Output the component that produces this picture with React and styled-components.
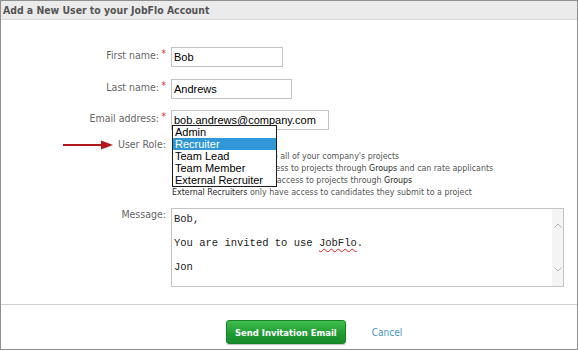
import React from "react";
import styled, { createGlobalStyle } from "styled-components";

const GlobalStyle = createGlobalStyle`
  html, body {
    margin: 0;
    padding: 0;
    background: #ffffff;
  }
  body {
    font-family: "DejaVu Sans Condensed", "DejaVu Sans", sans-serif;
  }
`;

const roles = ["Admin", "Recruiter", "Team Lead", "Team Member", "External Recruiter"];

const Panel = styled.div`
  width: 578px;
  height: 350px;
  box-sizing: border-box;
  border: 1px solid #8f8f8f;
  display: flex;
  flex-direction: column;
  background: #fff;
  overflow: hidden;
`;

const Header = styled.div`
  height: 18px;
  background: #ebebeb;
  border-bottom: 1px solid #dadada;
  padding-left: 2px;
  display: flex;
  align-items: center;
  font-weight: bold;
  font-size: 10.4px;
  color: #555;
`;

const Body = styled.div`
  flex: 1;
  padding: 27px 13px 0 0;
  display: flex;
  flex-direction: column;
`;

const Row = styled.div`
  display: flex;
  align-items: flex-start;
  gap: 5px;
  margin-bottom: ${(p) => p.$gap || 0}px;
`;

const Label = styled.div`
  width: 165px;
  flex: none;
  display: flex;
  justify-content: flex-end;
  align-items: center;
  padding-top: ${(p) => p.$top || 0}px;
  font-size: 10.5px;
  color: #666;
  line-height: 13px;
`;

const Star = styled.span`
  width: 7px;
  align-self: flex-start;
  color: #d33;
  font-size: 10px;
  line-height: 9px;
  text-align: right;
`;

const Arrow = styled.svg`
  margin-right: 5px;
`;

const TextInput = styled.input`
  width: ${(p) => p.$w}px;
  height: 20px;
  box-sizing: border-box;
  border: 1px solid #c4c4c4;
  padding: 0 2px;
  margin: 0;
  font-family: "Liberation Sans", Arial, sans-serif;
  font-size: 11px;
  color: #000;
  outline: none;
`;

const RoleField = styled.div`
  position: relative;
  padding-top: 12px;
`;

const Listbox = styled.ul`
  position: absolute;
  top: -13px;
  left: 1px;
  width: 105px;
  box-sizing: border-box;
  margin: 0;
  padding: 0;
  list-style: none;
  border: 1px solid #1e1e1e;
  background: #fff;
  font-family: "Liberation Sans", Arial, sans-serif;
  font-size: 11px;
  line-height: 12px;
`;

const Option = styled.li`
  height: 12px;
  padding-left: 2px;
  white-space: nowrap;
  color: ${(p) => (p.$active ? "#fff" : "#000")};
  background: ${(p) => (p.$active ? "#3198d8" : "transparent")};
`;

const Descriptions = styled.div`
  padding-left: 1px;
  font-size: 8.8px;
  line-height: 12px;
  color: #555;
  white-space: nowrap;

  b {
    font-weight: normal;
    color: #262626;
  }
`;

const MessageBox = styled.div`
  flex: 1;
  height: 79px;
  box-sizing: border-box;
  border: 1px solid #c4c4c4;
  display: flex;
  margin-top: 10px;
`;

const MessageText = styled.div`
  flex: 1;
  padding: 4px 2px;
  font-family: "Liberation Mono", "Courier New", monospace;
  font-size: 10.5px;
  line-height: 12px;
  color: #222;
  white-space: pre;
`;

const Misspelled = styled.span`
  text-decoration: underline wavy #e02020;
  text-decoration-thickness: 1px;
  text-underline-offset: 2px;
`;

const Scrollbar = styled.div`
  width: 11px;
  background: #f4f4f4;
  display: flex;
  flex-direction: column;
  justify-content: space-between;
  align-items: center;
  padding: 14px 0 14px;
`;

const Footer = styled.div`
  border-top: 1px solid #cfcfcf;
  margin-top: 17px;
  padding: 15px 0 5px 225px;
  display: flex;
  align-items: center;
  gap: 26px;
`;

const SendButton = styled.button`
  height: 24px;
  padding: 0 8px;
  border: 1px solid #17822a;
  border-radius: 3px;
  background: linear-gradient(#3fbf4d, #1e9a32 60%, #178a2a);
  color: #fff;
  font-family: "DejaVu Sans Condensed", "DejaVu Sans", sans-serif;
  font-weight: bold;
  font-size: 9.4px;
  box-shadow: 0 1px 1px rgba(0, 0, 0, 0.25);
`;

const CancelLink = styled.a`
  font-size: 10px;
  color: #3f95cf;
  text-decoration: none;
`;

const Chevron = ({ up }) => (
  <svg width="8" height="5" viewBox="0 0 8 5">
    <path
      d={up ? "M0.5 4.5 L4 1 L7.5 4.5" : "M0.5 0.5 L4 4 L7.5 0.5"}
      fill="none"
      stroke="#b5b5b5"
      strokeWidth="1"
    />
  </svg>
);

export default function App() {
  return (
    <>
      <GlobalStyle />
      <Panel>
        <Header>Add a New User to your JobFlo Account</Header>
        <Body>
          <Row $gap={12}>
            <Label $top={2}>
              First name:<Star>*</Star>
            </Label>
            <TextInput $w={112} defaultValue="Bob" readOnly />
          </Row>
          <Row $gap={11}>
            <Label $top={2}>
              Last name:<Star>*</Star>
            </Label>
            <TextInput $w={121} defaultValue="Andrews" readOnly />
          </Row>
          <Row $gap={8}>
            <Label $top={2}>
              Email address:<Star>*</Star>
            </Label>
            <TextInput $w={158} defaultValue="bob.andrews@company.com" readOnly />
          </Row>
          <Row>
            <Label>
              <Arrow width="50" height="10" viewBox="0 0 50 10">
                <line x1="0" y1="5" x2="40" y2="5" stroke="#b3151d" strokeWidth="2" />
                <polygon points="38,0.5 50,5 38,9.5" fill="#b3151d" />
              </Arrow>
              User Role:
            </Label>
            <RoleField>
              <Listbox>
                {roles.map((r) => (
                  <Option key={r} $active={r === "Recruiter"}>
                    {r}
                  </Option>
                ))}
              </Listbox>
              <Descriptions>
                <div>
                  <b>Admins</b> have full access to all of your company's projects
                </div>
                <div>
                  <b>Recruiters</b> have direct access to projects through <b>Groups</b> and can rate applicants
                </div>
                <div>
                  <b>Team Members</b> have read access to projects through <b>Groups</b>
                </div>
                <div>
                  <b>External Recruiters</b> only have access to candidates they submit to a project
                </div>
              </Descriptions>
            </RoleField>
          </Row>
          <Row>
            <Label $top={10}>Message:</Label>
            <MessageBox>
              <MessageText>
                {"Bob,\n\nYou are invited to use "}
                <Misspelled>JobFlo</Misspelled>
                {".\n\nJon"}
              </MessageText>
              <Scrollbar>
                <Chevron up />
                <Chevron />
              </Scrollbar>
            </MessageBox>
          </Row>
        </Body>
        <Footer>
          <SendButton>Send Invitation Email</SendButton>
          <CancelLink href="#">Cancel</CancelLink>
        </Footer>
      </Panel>
    </>
  );
}
